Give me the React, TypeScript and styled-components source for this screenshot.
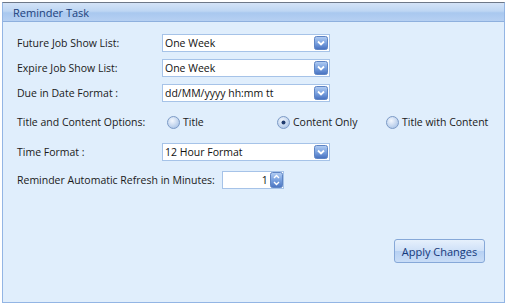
import * as React from "react";
import styled, { createGlobalStyle } from "styled-components";

const GlobalStyle = createGlobalStyle`
  html, body {
    margin: 0;
    padding: 0;
    background: #ffffff;
  }
  body {
    padding: 2px;
    font-family: "Open Sans", "Noto Sans", Arial, sans-serif;
  }
`;

const Panel = styled.div`
  width: 503px;
  height: 301px;
  box-sizing: border-box;
  display: flex;
  flex-direction: column;
  background: #e0eefc;
  border: 1px solid #93b5e4;
  border-top-color: #6d7888;
`;

const Header = styled.div`
  height: 18px;
  display: flex;
  align-items: center;
  padding-left: 10px;
  background: linear-gradient(to bottom, #d3e3f7 0%, #bed6f3 45%, #a9c8ef 55%, #b6d0f2 100%);
  border-bottom: 1px solid #8eb0de;
  color: #1c3f7c;
  font-size: 11px;
`;

const Body = styled.div`
  flex: 1;
  display: flex;
  flex-direction: column;
  padding: 8px 0 0 14px;
`;

const Row = styled.div<{ $h: number }>`
  height: ${(p) => p.$h}px;
  display: flex;
  align-items: center;
`;

const Label = styled.div<{ $w?: number }>`
  width: ${(p) => (p.$w ? `${p.$w}px` : "auto")};
  flex: none;
  font-size: 10.5px;
  color: #1a1a1a;
  white-space: nowrap;
`;

const SelectBox = styled.div`
  width: 168px;
  height: 18px;
  box-sizing: border-box;
  display: flex;
  align-items: center;
  justify-content: space-between;
  background: #ffffff;
  border: 1px solid #a6c3e8;
  padding: 0 1px 0 2px;
  font-size: 10.5px;
  color: #111;
`;

const RadioGroup = styled.div`
  display: flex;
  align-items: center;
`;

const RadioItem = styled.label<{ $w: number }>`
  width: ${(p) => p.$w}px;
  display: flex;
  align-items: center;
  gap: 3px;
  font-size: 10.5px;
  color: #1a1a1a;
  white-space: nowrap;
`;

const Spinner = styled.div`
  width: 62px;
  height: 18px;
  box-sizing: border-box;
  margin-left: 7px;
  display: flex;
  align-items: center;
  justify-content: flex-end;
  background: #ffffff;
  border: 1px solid #a6c3e8;
  font-size: 10.5px;
  color: #111;
`;

const SpinValue = styled.span`
  margin-right: 2px;
`;

const Footer = styled.div`
  margin-top: auto;
  display: flex;
  justify-content: flex-end;
  padding: 0 19px 39px 0;
`;

const ApplyButton = styled.button`
  width: 91px;
  height: 24px;
  border: 1px solid #86a8d8;
  border-radius: 3px;
  background: linear-gradient(to bottom, #e6f0fc 0%, #cfe1f8 48%, #b7d1f3 52%, #c9ddf7 100%);
  color: #15387a;
  font-family: inherit;
  font-size: 11px;
  padding: 0;
`;

const DropIcon = () => (
  <svg width="14" height="14" viewBox="0 0 14 14">
    <defs>
      <linearGradient id="dd" x1="0" y1="0" x2="0" y2="1">
        <stop offset="0" stopColor="#b4cef3" />
        <stop offset="0.5" stopColor="#7aa2e0" />
        <stop offset="1" stopColor="#4670bf" />
      </linearGradient>
    </defs>
    <rect x="0.5" y="0.5" width="13" height="13" rx="2" fill="url(#dd)" stroke="#5f85c4" />
    <path d="M4 5.5 L7 8.5 L10 5.5" fill="none" stroke="#ffffff" strokeWidth="1.8" />
  </svg>
);

const SpinIcon = () => (
  <svg width="13" height="16" viewBox="0 0 13 16">
    <defs>
      <linearGradient id="sp" x1="0" y1="0" x2="0" y2="1">
        <stop offset="0" stopColor="#b4cef3" />
        <stop offset="0.5" stopColor="#7aa2e0" />
        <stop offset="1" stopColor="#4a74c0" />
      </linearGradient>
    </defs>
    <rect x="0.5" y="0.5" width="12" height="15" rx="2" fill="url(#sp)" stroke="#5f85c4" />
    <path d="M4 6 L6.5 3.5 L9 6" fill="none" stroke="#ffffff" strokeWidth="1.4" />
    <path d="M4 10 L6.5 12.5 L9 10" fill="none" stroke="#ffffff" strokeWidth="1.4" />
  </svg>
);

const RadioIcon = ({ checked }: { checked?: boolean }) => (
  <svg width="13" height="13" viewBox="0 0 13 13">
    <defs>
      <radialGradient id="rb" cx="0.4" cy="0.35" r="0.7">
        <stop offset="0" stopColor="#f4f8fe" />
        <stop offset="1" stopColor="#a9c3e6" />
      </radialGradient>
    </defs>
    <circle cx="6.5" cy="6.5" r="6" fill="url(#rb)" stroke="#7d9bc6" />
    {checked && <circle cx="6.5" cy="6.5" r="2" fill="#1f3b6e" />}
  </svg>
);

const Select = ({ value }: { value: string }) => (
  <SelectBox>
    <span>{value}</span>
    <DropIcon />
  </SelectBox>
);

export default function App() {
  return (
    <>
      <GlobalStyle />
      <Panel>
        <Header>Reminder Task</Header>
        <Body>
          <Row $h={25}>
            <Label $w={145}>Future Job Show List:</Label>
            <Select value="One Week" />
          </Row>
          <Row $h={25}>
            <Label $w={145}>Expire Job Show List:</Label>
            <Select value="One Week" />
          </Row>
          <Row $h={25}>
            <Label $w={145}>Due in Date Format :</Label>
            <Select value="dd/MM/yyyy hh:mm tt" />
          </Row>
          <Row $h={34}>
            <Label $w={150}>Title and Content Options:</Label>
            <RadioGroup>
              <RadioItem $w={110}>
                <RadioIcon />
                Title
              </RadioItem>
              <RadioItem $w={109}>
                <RadioIcon checked />
                Content Only
              </RadioItem>
              <RadioItem $w={110}>
                <RadioIcon />
                Title with Content
              </RadioItem>
            </RadioGroup>
          </Row>
          <Row $h={26}>
            <Label $w={145}>Time Format :</Label>
            <Select value="12 Hour Format" />
          </Row>
          <Row $h={30}>
            <Label>Reminder Automatic Refresh in Minutes:</Label>
            <Spinner>
              <SpinValue>1</SpinValue>
              <SpinIcon />
            </Spinner>
          </Row>
          <Footer>
            <ApplyButton>Apply Changes</ApplyButton>
          </Footer>
        </Body>
      </Panel>
    </>
  );
}
